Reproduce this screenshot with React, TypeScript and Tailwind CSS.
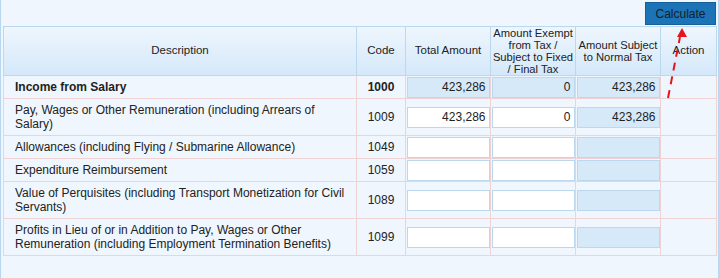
const rows = [
  { desc: 'Income from Salary', code: '1000', bold: true, total: '423,286', exempt: '0', normal: '423,286', locked: true, h: 'h-[23px]' },
  { desc: 'Pay, Wages or Other Remuneration (including Arrears of Salary)', code: '1009', total: '423,286', exempt: '0', normal: '423,286', h: 'h-[37px]' },
  { desc: 'Allowances (including Flying / Submarine Allowance)', code: '1049', h: 'h-[23px]' },
  { desc: 'Expenditure Reimbursement', code: '1059', h: 'h-[23px]' },
  { desc: 'Value of Perquisites (including Transport Monetization for Civil Servants)', code: '1089', h: 'h-[37px]' },
  { desc: 'Profits in Lieu of or in Addition to Pay, Wages or Other Remuneration (including Employment Termination Benefits)', code: '1099', h: 'h-[37px]' },
];

function Field({ value, locked }: { value?: string; locked?: boolean }) {
  return (
    <div
      className={`mx-auto h-[21px] w-[83px] border border-[#bdd7ed] pr-[3px] text-right text-[12px] leading-[19px] ${
        locked ? 'bg-[#d5e9f9]' : 'bg-white'
      }`}
    >
      {value}
    </div>
  );
}

export default function App() {
  return (
    <div
      className="relative h-[278px] w-[719px] border-x border-[#b7d6ef] bg-[#eff6fd] text-[12px] text-[#222]"
      style={{ fontFamily: '"Liberation Sans", Arial, sans-serif' }}
    >
      {/* Toolbar */}
      <div className="flex h-[26px] justify-end pt-[2px] pr-[2px]">
        <button className="h-[23px] w-[71px] border border-[#15609a] bg-[#1c74b6] text-[12px] text-[#10202e]">
          Calculate
        </button>
      </div>

      {/* Salary table */}
      <table className="ml-[2px] w-[713px] table-fixed border-collapse">
        <colgroup>
          <col className="w-[353px]" />
          <col className="w-[49px]" />
          <col className="w-[85px]" />
          <col className="w-[85px]" />
          <col className="w-[85px]" />
          <col className="w-[56px]" />
        </colgroup>
        <thead>
          <tr className="h-[49px] bg-gradient-to-b from-[#eef6fd] to-[#d4e8fa] text-[11.5px]">
            <th className="border border-[#bcd8ee] font-normal">Description</th>
            <th className="border border-[#bcd8ee] font-normal">Code</th>
            <th className="border border-[#bcd8ee] font-normal">Total Amount</th>
            <th className="border border-[#bcd8ee] px-0 text-[11.2px] leading-[12px] font-normal">
              Amount Exempt from Tax / Subject to Fixed / Final Tax
            </th>
            <th className="border border-[#bcd8ee] px-0 text-[11.2px] leading-[12px] font-normal">
              Amount Subject to Normal Tax
            </th>
            <th className="border border-[#bcd8ee] font-normal">Action</th>
          </tr>
        </thead>
        <tbody>
          {rows.map((r) => (
            <tr key={r.code} className={r.h}>
              <td className={`border border-[#efd2d3] pr-1 pl-[11px] leading-[14px] ${r.bold ? 'font-bold' : ''}`}>
                {r.desc}
              </td>
              <td className={`border border-[#efd2d3] text-center ${r.bold ? 'font-bold' : ''}`}>{r.code}</td>
              <td className="border border-[#efd2d3] p-0">
                <Field value={r.total} locked={r.locked} />
              </td>
              <td className="border border-[#efd2d3] p-0">
                <Field value={r.exempt} locked={r.locked} />
              </td>
              <td className="border border-[#efd2d3] p-0">
                <Field value={r.normal} locked />
              </td>
              <td className="border border-[#efd2d3]" />
            </tr>
          ))}
        </tbody>
      </table>

      {/* annotation arrow */}
      <svg className="pointer-events-none absolute top-0 left-0" width="719" height="278">
        <line x1="667" y1="98" x2="679" y2="37" stroke="#e8131b" strokeWidth="2" strokeDasharray="8 6" />
        <polygon points="681,28 676,37 686,37" fill="#e8131b" />
      </svg>
    </div>
  );
}
